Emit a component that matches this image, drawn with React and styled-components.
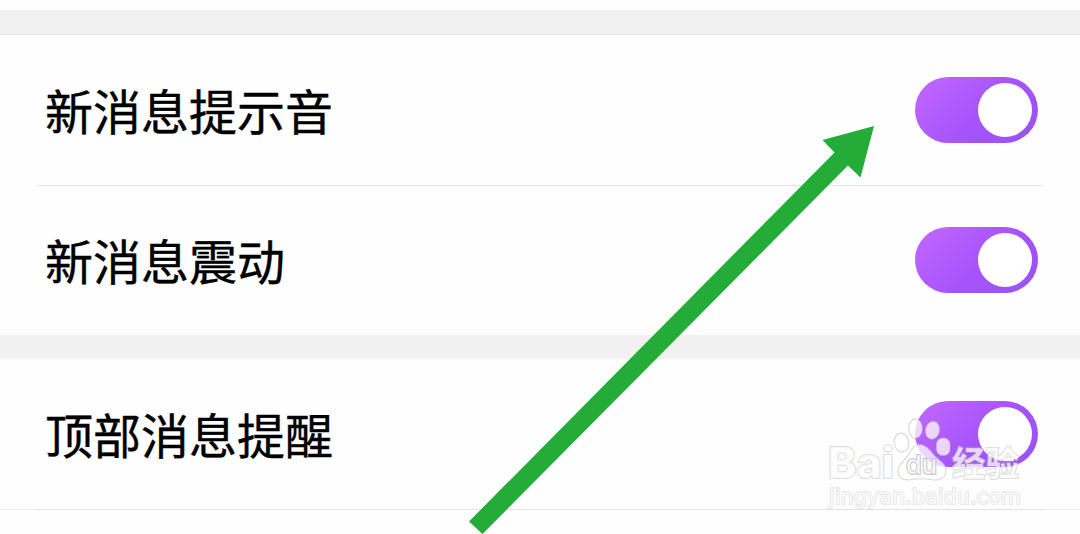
import React from "react";
import styled, { createGlobalStyle } from "styled-components";

const GlobalStyle = createGlobalStyle`
* {
  box-sizing: border-box;
}
body {
  margin: 0;
  background: #fefefe;
  overflow: hidden;
}
`

const Screen = styled.main`
position: relative;
width: 1080px;
height: 534px;
padding-top: 10px;
overflow: hidden;
background: #fefefe;
font-family: "Noto Sans CJK SC", sans-serif;
`

const Gap = styled.div`
height: ${(props) => (props.$line ? "25px" : "24px")};
background: #f1f1f1;
border-bottom: ${(props) => (props.$line ? "1px solid #e6e6e6" : "none")};
`

const Row = styled.div`
display: flex;
align-items: center;
justify-content: space-between;
height: ${(props) => props.$height}px;
padding: 0 42px ${(props) => 150 - props.$height}px 45px;
`

const Label = styled.span`
padding-bottom: 3px;
color: #000;
font-size: 48px;
line-height: 70px;
-webkit-text-stroke: 0.4px #000;
`

const Toggle = styled.button`
display: flex;
align-items: center;
justify-content: flex-end;
width: 123px;
height: 66px;
padding: 0 6px;
border: none;
border-radius: 33px;
background: linear-gradient(135deg, #bb63ff 15%, #a653fb 55%, #9853f0 100%);
`

const Knob = styled.span`
width: 54px;
height: 54px;
border-radius: 50%;
background: #fff;
`

const Divider = styled.hr`
height: 1px;
margin: 0 36px;
border: none;
background: #e6e6e6;
`

const LastDivider = styled(Divider)`
margin: 0;
background: linear-gradient(90deg, #efefef 36px, #e4e4e4 36px, #e4e4e4 1044px, #efefef 1044px);
`

const Overlay = styled.svg`
position: absolute;
top: 0;
left: 0;
pointer-events: none;
`

const Mark = styled.g`
fill: #fff;
fill-opacity: 0.75;
stroke: #b8b8b8;
stroke-opacity: 0.5;
stroke-width: 1.2px;
`

const MarkText = styled.text`
font-family: ${(props) => props.$font}, sans-serif;
font-size: ${(props) => props.$size}px;
font-weight: ${(props) => props.$weight || 400};
paint-order: stroke;
stroke-width: 2px;
stroke-opacity: ${(props) => props.$outline || 0.45};
`

function Setting({ label, height }) {
  return (
    <Row $height={height}>
      <Label>{label}</Label>
      <Toggle role="switch" aria-checked="true" aria-label={label}>
        <Knob />
      </Toggle>
    </Row>
  );
}

function Watermark() {
  return (
    <Mark>
      <MarkText $font='"Inter"' $size={42} $weight={800} x="828" y="478" textLength="66" lengthAdjust="spacingAndGlyphs">
        Bai
      </MarkText>
      <ellipse cx="901.5" cy="442.5" rx="7.2" ry="9.5" transform="rotate(-8 901.5 442.5)" />
      <ellipse cx="915.6" cy="428.5" rx="6.8" ry="9.7" />
      <ellipse cx="932.5" cy="430.2" rx="7" ry="9" transform="rotate(12 932.5 430.2)" />
      <rect x="936.5" y="438" width="13.5" height="17.5" rx="6.3" />
      <path d="M919 444.5C928 444.5 931 453 937 458C943 463 947 466 946 472C945 479 938 481 930 479.5C924 478.5 918 478.5 912 479.5C904 481 898 478 898 471C898 464 905 460 909 454C912 449 914 445 919 444.5Z" />
      <MarkText $font='"Inter"' $size={26} $weight={500} $outline={0.8} x="906" y="474" textLength="31" lengthAdjust="spacingAndGlyphs">
        du
      </MarkText>
      <MarkText $font='"Noto Sans CJK SC"' $size={34} $weight={700} x="952" y="476" textLength="67" lengthAdjust="spacingAndGlyphs">
        经验
      </MarkText>
      <MarkText $font='"DejaVu Sans"' $size={21} $outline={0.32} x="829" y="504" textLength="192" lengthAdjust="spacingAndGlyphs">
        jingyan.baidu.com
      </MarkText>
    </Mark>
  );
}

export default function App() {
  return (
    <>
      <GlobalStyle />
      <Screen>
        <Gap $line />
        <Setting label="新消息提示音" height={150} />
        <Divider />
        <Setting label="新消息震动" height={149} />
        <Gap />
        <Setting label="顶部消息提醒" height={150} />
        <LastDivider />
        <Overlay width="1080" height="534" viewBox="0 0 1080 534">
          <path
            fill="#23ac38"
            d="M874 126L860.5 177.5L848 165.5L482.5 534L469 521.5L834.5 152.5L822.5 140Z"
          />
          <Watermark />
        </Overlay>
      </Screen>
    </>
  );
}
